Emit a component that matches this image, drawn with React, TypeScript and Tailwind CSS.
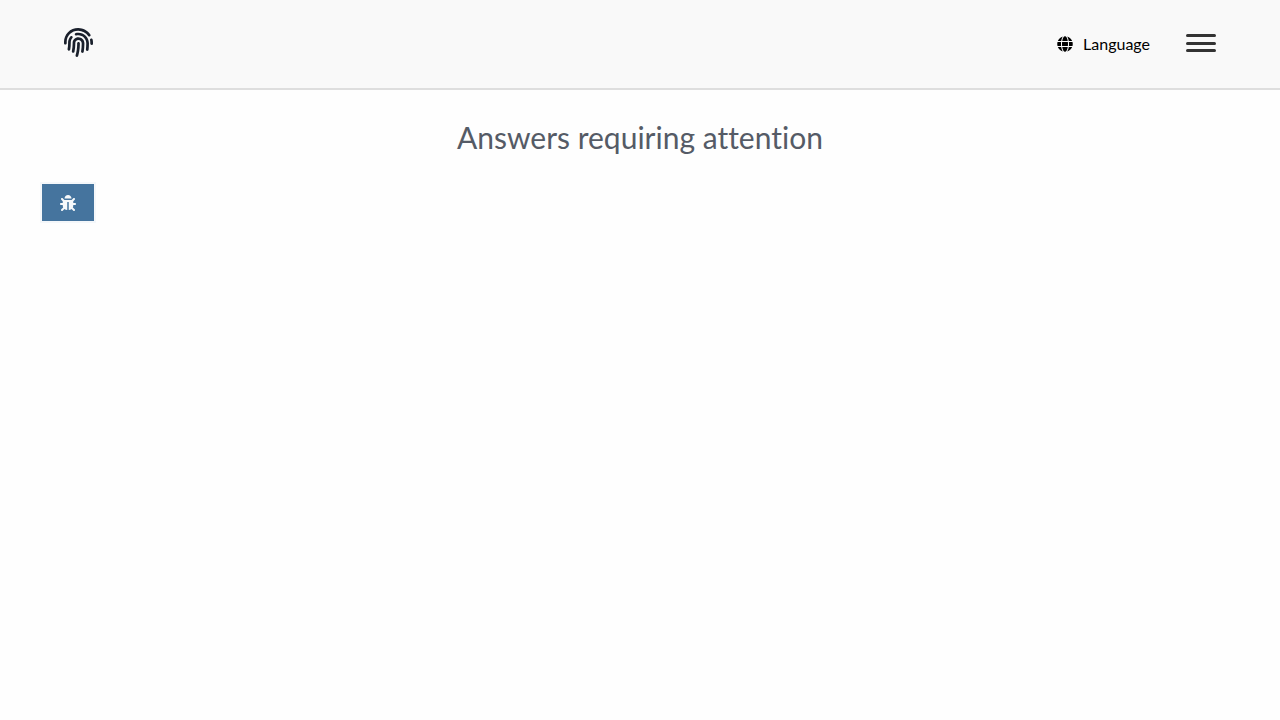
import { FaBug, FaFingerprint, FaGlobe } from "react-icons/fa";

export default function App() {
  return (
    <div className="min-h-screen bg-[#fefefe] font-['Lato',sans-serif] text-black">
      <header className="flex h-[90px] items-center justify-between border-b-2 border-[#dedede] bg-[#f9f9f9] px-16">
        <a href="#home" aria-label="Home" className="-mt-1 text-[#1a202c]">
          <FaFingerprint className="size-[29px]" />
        </a>
        <div className="flex items-center gap-9">
          <button type="button" className="flex items-center gap-2.5 text-base">
            <FaGlobe className="size-4" />
            Language
          </button>
          <button type="button" aria-label="Menu" className="-mt-0.5 flex h-[18px] w-[30px] flex-col justify-between">
            <span className="h-[3px] w-full rounded-sm bg-[#333]" />
            <span className="h-[3px] w-full rounded-sm bg-[#333]" />
            <span className="h-[3px] w-full rounded-sm bg-[#333]" />
          </button>
        </div>
      </header>
      <main className="px-10 pt-6">
        <h1 className="text-center text-3xl leading-[46px] text-[#555b66] [font-variant-ligatures:none]">
          Answers requiring attention
        </h1>
        <button
          type="button"
          aria-label="Report a bug"
          className="mt-[22px] flex h-[41px] w-14 items-center justify-center border-2 border-[#f4f7fa] bg-[#45749e] text-[#f7f9fb]"
        >
          <FaBug className="size-4" />
        </button>
      </main>
    </div>
  );
}
